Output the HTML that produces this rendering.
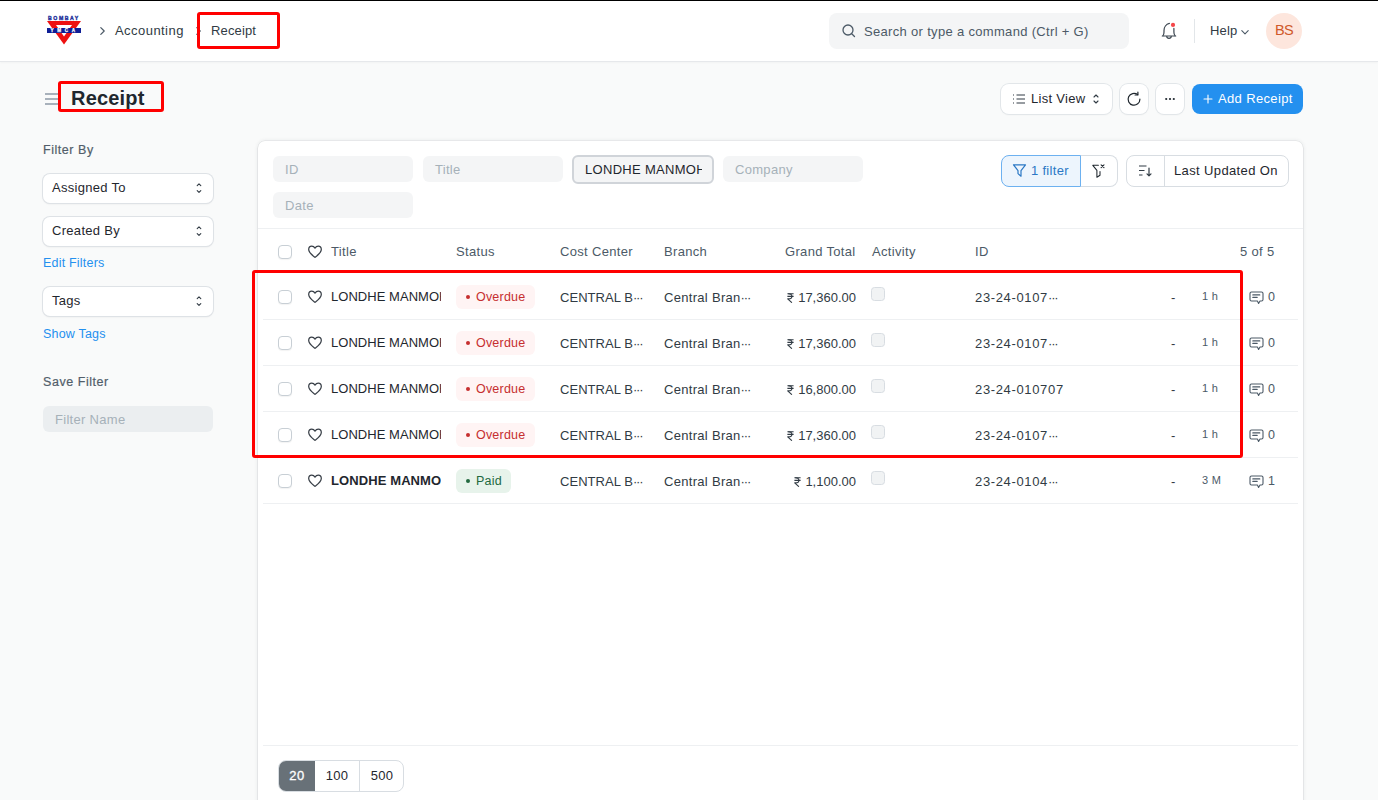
<!DOCTYPE html>
<html><head><meta charset="utf-8">
<style>
*{box-sizing:border-box;margin:0;padding:0}
html,body{width:1378px;height:800px;overflow:hidden}
body{background:#F9FAFA;font-family:"Liberation Sans",sans-serif;color:#1F272E;position:relative;font-size:13px}
.abs{position:absolute}
.topline{position:absolute;left:0;top:0;width:1378px;height:1px;background:#000}
.nav{position:absolute;left:0;top:1px;width:1378px;height:60px;background:#fff;box-shadow:0 1px 0 #E6E8EB,0 2px 2px rgba(0,0,0,.03)}
.redbox{position:absolute;border:3px solid #F00;border-radius:3px}
.crumb{position:absolute;top:23px;font-size:13px;color:#313B44;white-space:nowrap}
.search{position:absolute;left:829px;top:13px;width:300px;height:36px;background:#F4F5F6;border-radius:8px}
.search span{position:absolute;left:35px;top:11px;font-size:13px;color:#4C5A67;white-space:nowrap}
.btn{position:absolute;background:#fff;border-radius:8px;box-shadow:0 0 0 1px #E2E6E9,0 1px 2px rgba(0,0,0,.06)}
.sel{position:absolute;left:43px;width:170px;height:28.5px;background:#fff;border-radius:7px;box-shadow:0 0 0 1px #DEE2E6,0 1px 2px rgba(0,0,0,.1)}
.sel span{position:absolute;left:9px;top:6px;font-size:13px;color:#1F272E}
.card{position:absolute;left:258px;top:141px;width:1045px;height:700px;background:#fff;border-radius:7px;box-shadow:0 0 0 0.5px rgba(25,39,52,.08),0 1px 2px rgba(25,39,52,.05),0 0 4px rgba(25,39,52,.1)}
.inp{position:absolute;height:26px;width:140px;background:#F4F5F6;border-radius:6px}
.inp span{position:absolute;left:12px;top:6px;font-size:13px;color:#A6B1B9;white-space:nowrap}
.hline{position:absolute;height:1px;background:#EEF0F2}
.txt{position:absolute;white-space:nowrap;font-size:13px}
.hd{top:244px;color:#4C5A67;letter-spacing:0.32px}

.row{position:absolute;left:258px;width:1045px;height:46px}
.cb{position:absolute;left:20px;top:16px;width:14px;height:14px;border:1px solid #C8CFD5;border-radius:4px;background:#fff;box-shadow:0 1px 1px rgba(0,0,0,.05)}
.heart{left:49px;top:15px}
.ttl{position:absolute;left:73px;top:15px;width:110px;overflow:hidden;white-space:nowrap;font-size:13px;color:#1F272E;letter-spacing:0.04px}
.pill{position:absolute;left:198px;top:11px;height:24px;border-radius:6px}
.pill.red{width:79px;background:#FFF4F4;color:#C62F2F}
.pill.green{width:55px;background:#E7F3EB;color:#22693F}
.pill i{position:absolute;left:10px;top:10px;width:4px;height:4px;border-radius:50%;background:currentColor}
.pill span{position:absolute;left:20px;top:5px;font-size:12.5px;letter-spacing:0.2px;white-space:nowrap}
.cell{position:absolute;top:16px;font-size:13px;color:#313B44;white-space:nowrap;letter-spacing:0.3px}
.acb{position:absolute;left:613px;top:13px;width:14px;height:14px;border:1px solid #D8DDE2;border-radius:3.5px;background:#F1F3F4}
.tm{position:absolute;left:944px;top:16px;font-size:11px;color:#4C5A67;white-space:nowrap;letter-spacing:0.3px}
.cmt{left:991px;top:17px}
.cnt{position:absolute;left:1010px;top:16px;font-size:12.5px;color:#4C5A67}
.el{letter-spacing:-1.15px}
.rs{display:inline-block;vertical-align:baseline;margin-right:4.5px;position:relative;top:0.5px}
</style></head><body>
<div class="topline"></div>
<div class="nav"></div>
<svg class="abs" style="left:44px;top:12px" width="42" height="36" viewBox="0 0 42 36">
  <g fill="#1C2F9A" font-family="Liberation Sans" font-weight="700" font-size="5.2">
    <text x="4" y="8.2" letter-spacing="1.55" stroke="#1C2F9A" stroke-width="0.35">BOMBAY</text>
  </g>
  <polygon points="3,9 37,9 20,32.5" fill="#EE1111"/>
  <polygon points="12,13 28,13 20,24.5" fill="#fff"/>
  <rect x="3" y="16" width="34" height="5" fill="#0E1E96"/>
  <g fill="#fff" stroke="#fff" stroke-width="0.25" font-family="Liberation Sans" font-weight="700" font-size="4.6">
    <text x="6.5" y="20.3" letter-spacing="3.7">YMCA</text>
  </g>
</svg>
<svg class="abs" style="left:99px;top:26px" width="8" height="10" viewBox="0 0 8 10"><path d="M1.8 1.6 L5.2 5 L1.8 8.4" fill="none" stroke="#4C5A67" stroke-width="1.2" stroke-linecap="round" stroke-linejoin="round"/></svg>
<div class="crumb" style="left:115px;letter-spacing:0.45px">Accounting</div>
<svg class="abs" style="left:195px;top:26px" width="8" height="10" viewBox="0 0 8 10"><path d="M1.8 1.6 L5.2 5 L1.8 8.4" fill="none" stroke="#4C5A67" stroke-width="1.2" stroke-linecap="round" stroke-linejoin="round"/></svg>
<div class="crumb" style="left:211px;letter-spacing:0.15px">Receipt</div>
<div class="redbox" style="left:197px;top:12px;width:83px;height:37px"></div>
<div class="search">
  <svg class="abs" style="left:12px;top:10px" width="16" height="16" viewBox="0 0 16 16"><circle cx="7" cy="7" r="5" fill="none" stroke="#4C5A67" stroke-width="1.3"/><path d="M10.7 10.7 L13.5 13.5" stroke="#4C5A67" stroke-width="1.3" stroke-linecap="round"/></svg>
  <span style="letter-spacing:0.32px">Search or type a command (Ctrl + G)</span>
</div>
<svg class="abs" style="left:1159px;top:21px" width="20" height="20" viewBox="0 0 20 20">
  <path d="M4 14.6 C4.8 13.8 5 12.5 5 11 V9.5 C5 6.5 7 3.2 10.4 2.4" fill="none" stroke="#3A444E" stroke-width="1.2" stroke-linecap="round"/>
  <path d="M14.9 7.4 V11 C14.9 12.5 15.1 13.8 16 14.6" fill="none" stroke="#3A444E" stroke-width="1.2" stroke-linecap="round"/>
  <path d="M3.3 15 H16.7" stroke="#3A444E" stroke-width="1.2" stroke-linecap="round"/>
  <path d="M7.6 15.2 C7.8 16.6 8.6 17.4 10 17.4 C11.4 17.4 12.2 16.6 12.4 15.2" fill="none" stroke="#3A444E" stroke-width="1.2"/>
  <circle cx="14" cy="3.9" r="2.1" fill="#F5474A"/>
</svg>
<div class="abs" style="left:1194px;top:19px;width:1px;height:24px;background:#E2E6E9"></div>
<div class="txt" style="left:1210px;top:23px;color:#313B44;letter-spacing:0.2px">Help</div>
<svg class="abs" style="left:1240px;top:27px" width="10" height="10" viewBox="0 0 10 10"><path d="M1.8 3.6 L5 6.8 L8.2 3.6" fill="none" stroke="#4C5A67" stroke-width="1.1" stroke-linecap="round" stroke-linejoin="round"/></svg>
<div class="abs" style="left:1266px;top:13px;width:36px;height:36px;border-radius:50%;background:#FDE6DD"></div>
<div class="txt" style="left:1266px;top:21.5px;width:36px;text-align:center;font-size:14.5px;letter-spacing:-0.6px;color:#D0592A">BS</div>


<!-- page head -->
<svg class="abs" style="left:44px;top:92px" width="16" height="14" viewBox="0 0 16 14"><path d="M1 2 H15 M1 7 H15 M1 12 H15" stroke="#8D99A6" stroke-width="1.3"/></svg>
<div class="txt" style="left:71px;top:87px;font-size:20px;font-weight:700;color:#1F272E;letter-spacing:0.2px">Receipt</div>
<div class="redbox" style="left:58px;top:81px;width:106px;height:31px"></div>

<div class="btn" style="left:1001px;top:84px;width:111px;height:30px">
  <svg class="abs" style="left:11px;top:8px" width="14" height="14" viewBox="0 0 14 14"><path d="M4.5 3 H13 M4.5 7 H13 M4.5 11 H13" stroke="#313B44" stroke-width="1.1"/><path d="M1 3 H2 M1 7 H2 M1 11 H2" stroke="#313B44" stroke-width="1.1"/></svg>
  <span class="txt" style="left:30px;top:7px;color:#1F272E;letter-spacing:0.3px">List View</span>
  <svg class="abs" style="left:91px;top:8px" width="8" height="14" viewBox="0 0 8 14"><path d="M2 5 L4 3 L6 5 M2 9 L4 11 L6 9" fill="none" stroke="#313B44" stroke-width="1.1" stroke-linecap="round" stroke-linejoin="round"/></svg>
</div>
<div class="btn" style="left:1120px;top:84px;width:28px;height:30px">
  <svg class="abs" style="left:5px;top:6px" width="18" height="18" viewBox="0 0 18 18"><path d="M14.9 9.2 A5.9 5.9 0 1 1 12.6 4.6" fill="none" stroke="#1F272E" stroke-width="1.2" stroke-linecap="round"/><path d="M12.9 2.2 V5 H10.1" fill="none" stroke="#1F272E" stroke-width="1.2" stroke-linecap="round" stroke-linejoin="round"/></svg>
</div>
<div class="btn" style="left:1156px;top:84px;width:28px;height:30px">
  <svg class="abs" style="left:6px;top:7px" width="16" height="16" viewBox="0 0 16 16"><circle cx="4.2" cy="8" r="1.1" fill="#1F272E"/><circle cx="8" cy="8" r="1.1" fill="#1F272E"/><circle cx="11.8" cy="8" r="1.1" fill="#1F272E"/></svg>
</div>
<div class="abs" style="left:1192px;top:84px;width:111px;height:30px;background:#2490EF;border-radius:8px">
  <svg class="abs" style="left:10px;top:9px" width="12" height="12" viewBox="0 0 12 12"><path d="M6 2 V10 M2 6 H10" stroke="#fff" stroke-width="1.1" stroke-linecap="round"/></svg>
  <span class="txt" style="left:26px;top:7px;color:#fff;letter-spacing:0.35px">Add Receipt</span>
</div>

<!-- sidebar -->
<div class="txt" style="left:43px;top:143px;font-size:12.5px;font-weight:400;-webkit-text-stroke:0.2px #525E6A;color:#525E6A;letter-spacing:0.55px">Filter By</div>
<div class="sel" style="top:174px"><span style="letter-spacing:0.3px">Assigned To</span>
  <svg class="abs" style="left:152px;top:8px" width="8" height="14" viewBox="0 0 8 14"><path d="M2.2 3.7 L4 1.9 L5.8 3.7 M2.2 8.6 L4 10.4 L5.8 8.6" fill="none" stroke="#313B44" stroke-width="1.1" stroke-linecap="round" stroke-linejoin="round"/></svg></div>
<div class="sel" style="top:217px"><span style="letter-spacing:0.3px">Created By</span>
  <svg class="abs" style="left:152px;top:8px" width="8" height="14" viewBox="0 0 8 14"><path d="M2.2 3.7 L4 1.9 L5.8 3.7 M2.2 8.6 L4 10.4 L5.8 8.6" fill="none" stroke="#313B44" stroke-width="1.1" stroke-linecap="round" stroke-linejoin="round"/></svg></div>
<div class="txt" style="left:43px;top:256px;font-size:12.5px;color:#2490EF;letter-spacing:0.2px">Edit Filters</div>
<div class="sel" style="top:287px"><span style="letter-spacing:0.3px">Tags</span>
  <svg class="abs" style="left:152px;top:8px" width="8" height="14" viewBox="0 0 8 14"><path d="M2.2 3.7 L4 1.9 L5.8 3.7 M2.2 8.6 L4 10.4 L5.8 8.6" fill="none" stroke="#313B44" stroke-width="1.1" stroke-linecap="round" stroke-linejoin="round"/></svg></div>
<div class="txt" style="left:43px;top:327px;font-size:12.5px;color:#2490EF;letter-spacing:0.2px">Show Tags</div>
<div class="txt" style="left:43px;top:375px;font-size:12.5px;font-weight:400;-webkit-text-stroke:0.2px #525E6A;color:#525E6A;letter-spacing:0.55px">Save Filter</div>
<div class="abs" style="left:43px;top:406px;width:170px;height:26px;background:#EBEEF0;border-radius:6px"><span class="txt" style="left:12px;top:6px;color:#A6B1B9;letter-spacing:0.3px">Filter Name</span></div>

<!-- card -->
<div class="card"></div>
<div class="inp" style="left:273px;top:156px"><span style="letter-spacing:0.3px">ID</span></div>
<div class="inp" style="left:423px;top:156px"><span style="letter-spacing:0.3px">Title</span></div>
<div class="inp" style="left:572px;top:154.5px;width:142px;height:29px;border:2px solid #D0D4D9"><span style="left:11px;top:5.5px;color:#1F272E;letter-spacing:0.3px;width:117px;overflow:hidden">LONDHE MANMOHAN</span></div>
<div class="inp" style="left:723px;top:156px"><span style="letter-spacing:0.3px">Company</span></div>
<div class="inp" style="left:273px;top:192px"><span style="letter-spacing:0.3px">Date</span></div>

<div class="abs" style="left:1001px;top:155px;width:80px;height:32px;border-radius:8px 0 0 8px;border:1px solid #6DB1F0;background:#EDF5FD">
  <svg class="abs" style="left:10px;top:6.5px" width="15" height="15" viewBox="0 0 15 15"><path d="M1.5 1.8 H13.5 L9 7.6 V13.2 L6 10.6 V7.6 Z" fill="none" stroke="#2B78C5" stroke-width="1.2" stroke-linejoin="round"/></svg>
  <span class="txt" style="left:29px;top:7px;color:#2B78C5;letter-spacing:0.3px">1 filter</span>
</div>
<div class="abs" style="left:1081px;top:155px;width:37px;height:32px;border-radius:0 8px 8px 0;border:1px solid #D8DDE2;border-left:none;background:#fff">
  <svg class="abs" style="left:10px;top:7px" width="15" height="16" viewBox="0 0 15 16"><path d="M1.8 2.3 H7.4 M1.8 2.3 L5.9 7.4 V14.2 L9 12.2 V8.6" fill="none" stroke="#1F272E" stroke-width="1.05" stroke-linejoin="round" stroke-linecap="round"/><path d="M10.1 1.8 L13 4.7 M13 1.8 L10.1 4.7" stroke="#1F272E" stroke-width="1.05" stroke-linecap="round"/></svg>
</div>
<div class="abs" style="left:1126px;top:155px;width:163px;height:32px;border-radius:8px;border:1px solid #D8DDE2;background:#fff">
  <div class="abs" style="left:37px;top:0;width:1px;height:30px;background:#D8DDE2"></div>
  <svg class="abs" style="left:11px;top:9px" width="15" height="13" viewBox="0 0 15 13"><path d="M1 1 H8.5 M1 5.5 H6.5 M1 10 H4.5" stroke="#313B44" stroke-width="1.15"/><path d="M11 3 V10.8 M9 8.8 L11 10.8 L13 8.8" fill="none" stroke="#313B44" stroke-width="1.2" stroke-linecap="round" stroke-linejoin="round"/></svg>
  <span class="txt" style="left:47px;top:7px;color:#1F272E;letter-spacing:0.37px">Last Updated On</span>
</div>

<div class="hline" style="left:258px;top:228px;width:1045px"></div>

<!-- header row -->
<div class="abs" style="left:278px;top:245px;width:14px;height:14px;border:1px solid #C8CFD5;border-radius:4px;background:#fff;box-shadow:0 1px 1px rgba(0,0,0,.05)"></div>
<svg class="abs" style="left:307px;top:244px" width="16" height="16" viewBox="0 0 16 16"><path d="M8 13.3 C6.2 11.9 1.7 8.8 1.7 5.5 C1.7 3.5 3.1 2.2 4.8 2.2 C6.2 2.2 7.3 3 8 4.1 C8.7 3 9.8 2.2 11.2 2.2 C12.9 2.2 14.3 3.5 14.3 5.5 C14.3 8.8 9.8 11.9 8 13.3 Z" fill="none" stroke="#383F47" stroke-width="1.25" stroke-linejoin="round"/></svg>
<div class="txt hd" style="left:331px">Title</div>
<div class="txt hd" style="left:456px">Status</div>
<div class="txt hd" style="left:560px">Cost Center</div>
<div class="txt hd" style="left:664px">Branch</div>
<div class="txt hd" style="left:785px">Grand Total</div>
<div class="txt hd" style="left:872px">Activity</div>
<div class="txt hd" style="left:975px">ID</div>
<div class="txt hd" style="left:1240px">5 of 5</div>
<!-- rows -->
<div class="row" style="top:274px">
<div class="cb"></div>
<svg class="abs heart" width="16" height="16" viewBox="0 0 16 16"><path d="M8 13.3 C6.2 11.9 1.7 8.8 1.7 5.5 C1.7 3.5 3.1 2.2 4.8 2.2 C6.2 2.2 7.3 3 8 4.1 C8.7 3 9.8 2.2 11.2 2.2 C12.9 2.2 14.3 3.5 14.3 5.5 C14.3 8.8 9.8 11.9 8 13.3 Z" fill="none" stroke="#383F47" stroke-width="1.25" stroke-linejoin="round"/></svg>
<div class="ttl" style="">LONDHE MANMOHAN</div>
<div class="pill red"><i></i><span>Overdue</span></div>
<div class="cell" style="left:302px;letter-spacing:0.05px">CENTRAL B<span class="el">···</span></div>
<div class="cell" style="left:406px">Central Bran<span class="el">···</span></div>
<div class="cell" style="left:498px;width:100px;text-align:right;letter-spacing:0"><svg class="rs" width="7" height="10" viewBox="0 0 7 10"><path d="M0.4 0.8 H6.6 M0.4 3.4 H6.6" stroke="#313B44" stroke-width="1.1"/><path d="M1.2 0.8 C3.8 0.8 4.9 1.9 4.9 3.4 C4.9 5 3.8 5.9 1.4 5.9 H0.7 L4.9 9.7" fill="none" stroke="#313B44" stroke-width="1.1" stroke-linejoin="round"/></svg>17,360.00</div>
<div class="acb"></div>
<div class="cell" style="left:717px;letter-spacing:0.65px">23-24-0107<span class="el">···</span></div>
<div class="cell" style="left:913px">-</div>
<div class="tm">1 h</div>
<svg class="abs cmt" width="15" height="14" viewBox="0 0 15 14"><path d="M2.5 1 H12.5 C13.3 1 14 1.7 14 2.5 V8.5 C14 9.3 13.3 10 12.5 10 H11 L9.6 12.4 L8.4 10 H2.5 C1.7 10 1 9.3 1 8.5 V2.5 C1 1.7 1.7 1 2.5 1 Z" fill="none" stroke="#4C5A67" stroke-width="1.1" stroke-linejoin="round"/><path d="M3.8 3.9 H10.8 M3.8 6.4 H8.2" stroke="#4C5A67" stroke-width="1.1" stroke-linecap="round"/></svg>
<div class="cnt">0</div>
</div>
<div class="hline" style="left:263px;top:319px;width:1035px"></div>
<div class="row" style="top:320px">
<div class="cb"></div>
<svg class="abs heart" width="16" height="16" viewBox="0 0 16 16"><path d="M8 13.3 C6.2 11.9 1.7 8.8 1.7 5.5 C1.7 3.5 3.1 2.2 4.8 2.2 C6.2 2.2 7.3 3 8 4.1 C8.7 3 9.8 2.2 11.2 2.2 C12.9 2.2 14.3 3.5 14.3 5.5 C14.3 8.8 9.8 11.9 8 13.3 Z" fill="none" stroke="#383F47" stroke-width="1.25" stroke-linejoin="round"/></svg>
<div class="ttl" style="">LONDHE MANMOHAN</div>
<div class="pill red"><i></i><span>Overdue</span></div>
<div class="cell" style="left:302px;letter-spacing:0.05px">CENTRAL B<span class="el">···</span></div>
<div class="cell" style="left:406px">Central Bran<span class="el">···</span></div>
<div class="cell" style="left:498px;width:100px;text-align:right;letter-spacing:0"><svg class="rs" width="7" height="10" viewBox="0 0 7 10"><path d="M0.4 0.8 H6.6 M0.4 3.4 H6.6" stroke="#313B44" stroke-width="1.1"/><path d="M1.2 0.8 C3.8 0.8 4.9 1.9 4.9 3.4 C4.9 5 3.8 5.9 1.4 5.9 H0.7 L4.9 9.7" fill="none" stroke="#313B44" stroke-width="1.1" stroke-linejoin="round"/></svg>17,360.00</div>
<div class="acb"></div>
<div class="cell" style="left:717px;letter-spacing:0.65px">23-24-0107<span class="el">···</span></div>
<div class="cell" style="left:913px">-</div>
<div class="tm">1 h</div>
<svg class="abs cmt" width="15" height="14" viewBox="0 0 15 14"><path d="M2.5 1 H12.5 C13.3 1 14 1.7 14 2.5 V8.5 C14 9.3 13.3 10 12.5 10 H11 L9.6 12.4 L8.4 10 H2.5 C1.7 10 1 9.3 1 8.5 V2.5 C1 1.7 1.7 1 2.5 1 Z" fill="none" stroke="#4C5A67" stroke-width="1.1" stroke-linejoin="round"/><path d="M3.8 3.9 H10.8 M3.8 6.4 H8.2" stroke="#4C5A67" stroke-width="1.1" stroke-linecap="round"/></svg>
<div class="cnt">0</div>
</div>
<div class="hline" style="left:263px;top:365px;width:1035px"></div>
<div class="row" style="top:366px">
<div class="cb"></div>
<svg class="abs heart" width="16" height="16" viewBox="0 0 16 16"><path d="M8 13.3 C6.2 11.9 1.7 8.8 1.7 5.5 C1.7 3.5 3.1 2.2 4.8 2.2 C6.2 2.2 7.3 3 8 4.1 C8.7 3 9.8 2.2 11.2 2.2 C12.9 2.2 14.3 3.5 14.3 5.5 C14.3 8.8 9.8 11.9 8 13.3 Z" fill="none" stroke="#383F47" stroke-width="1.25" stroke-linejoin="round"/></svg>
<div class="ttl" style="">LONDHE MANMOHAN</div>
<div class="pill red"><i></i><span>Overdue</span></div>
<div class="cell" style="left:302px;letter-spacing:0.05px">CENTRAL B<span class="el">···</span></div>
<div class="cell" style="left:406px">Central Bran<span class="el">···</span></div>
<div class="cell" style="left:498px;width:100px;text-align:right;letter-spacing:0"><svg class="rs" width="7" height="10" viewBox="0 0 7 10"><path d="M0.4 0.8 H6.6 M0.4 3.4 H6.6" stroke="#313B44" stroke-width="1.1"/><path d="M1.2 0.8 C3.8 0.8 4.9 1.9 4.9 3.4 C4.9 5 3.8 5.9 1.4 5.9 H0.7 L4.9 9.7" fill="none" stroke="#313B44" stroke-width="1.1" stroke-linejoin="round"/></svg>16,800.00</div>
<div class="acb"></div>
<div class="cell" style="left:717px;letter-spacing:0.65px">23-24-010707</div>
<div class="cell" style="left:913px">-</div>
<div class="tm">1 h</div>
<svg class="abs cmt" width="15" height="14" viewBox="0 0 15 14"><path d="M2.5 1 H12.5 C13.3 1 14 1.7 14 2.5 V8.5 C14 9.3 13.3 10 12.5 10 H11 L9.6 12.4 L8.4 10 H2.5 C1.7 10 1 9.3 1 8.5 V2.5 C1 1.7 1.7 1 2.5 1 Z" fill="none" stroke="#4C5A67" stroke-width="1.1" stroke-linejoin="round"/><path d="M3.8 3.9 H10.8 M3.8 6.4 H8.2" stroke="#4C5A67" stroke-width="1.1" stroke-linecap="round"/></svg>
<div class="cnt">0</div>
</div>
<div class="hline" style="left:263px;top:411px;width:1035px"></div>
<div class="row" style="top:412px">
<div class="cb"></div>
<svg class="abs heart" width="16" height="16" viewBox="0 0 16 16"><path d="M8 13.3 C6.2 11.9 1.7 8.8 1.7 5.5 C1.7 3.5 3.1 2.2 4.8 2.2 C6.2 2.2 7.3 3 8 4.1 C8.7 3 9.8 2.2 11.2 2.2 C12.9 2.2 14.3 3.5 14.3 5.5 C14.3 8.8 9.8 11.9 8 13.3 Z" fill="none" stroke="#383F47" stroke-width="1.25" stroke-linejoin="round"/></svg>
<div class="ttl" style="">LONDHE MANMOHAN</div>
<div class="pill red"><i></i><span>Overdue</span></div>
<div class="cell" style="left:302px;letter-spacing:0.05px">CENTRAL B<span class="el">···</span></div>
<div class="cell" style="left:406px">Central Bran<span class="el">···</span></div>
<div class="cell" style="left:498px;width:100px;text-align:right;letter-spacing:0"><svg class="rs" width="7" height="10" viewBox="0 0 7 10"><path d="M0.4 0.8 H6.6 M0.4 3.4 H6.6" stroke="#313B44" stroke-width="1.1"/><path d="M1.2 0.8 C3.8 0.8 4.9 1.9 4.9 3.4 C4.9 5 3.8 5.9 1.4 5.9 H0.7 L4.9 9.7" fill="none" stroke="#313B44" stroke-width="1.1" stroke-linejoin="round"/></svg>17,360.00</div>
<div class="acb"></div>
<div class="cell" style="left:717px;letter-spacing:0.65px">23-24-0107<span class="el">···</span></div>
<div class="cell" style="left:913px">-</div>
<div class="tm">1 h</div>
<svg class="abs cmt" width="15" height="14" viewBox="0 0 15 14"><path d="M2.5 1 H12.5 C13.3 1 14 1.7 14 2.5 V8.5 C14 9.3 13.3 10 12.5 10 H11 L9.6 12.4 L8.4 10 H2.5 C1.7 10 1 9.3 1 8.5 V2.5 C1 1.7 1.7 1 2.5 1 Z" fill="none" stroke="#4C5A67" stroke-width="1.1" stroke-linejoin="round"/><path d="M3.8 3.9 H10.8 M3.8 6.4 H8.2" stroke="#4C5A67" stroke-width="1.1" stroke-linecap="round"/></svg>
<div class="cnt">0</div>
</div>
<div class="hline" style="left:263px;top:457px;width:1035px"></div>
<div class="row" style="top:458px">
<div class="cb"></div>
<svg class="abs heart" width="16" height="16" viewBox="0 0 16 16"><path d="M8 13.3 C6.2 11.9 1.7 8.8 1.7 5.5 C1.7 3.5 3.1 2.2 4.8 2.2 C6.2 2.2 7.3 3 8 4.1 C8.7 3 9.8 2.2 11.2 2.2 C12.9 2.2 14.3 3.5 14.3 5.5 C14.3 8.8 9.8 11.9 8 13.3 Z" fill="none" stroke="#383F47" stroke-width="1.25" stroke-linejoin="round"/></svg>
<div class="ttl" style="font-weight:700;letter-spacing:0.1px;">LONDHE MANMOHAN</div>
<div class="pill green"><i></i><span>Paid</span></div>
<div class="cell" style="left:302px;letter-spacing:0.05px">CENTRAL B<span class="el">···</span></div>
<div class="cell" style="left:406px">Central Bran<span class="el">···</span></div>
<div class="cell" style="left:498px;width:100px;text-align:right;letter-spacing:0"><svg class="rs" width="7" height="10" viewBox="0 0 7 10"><path d="M0.4 0.8 H6.6 M0.4 3.4 H6.6" stroke="#313B44" stroke-width="1.1"/><path d="M1.2 0.8 C3.8 0.8 4.9 1.9 4.9 3.4 C4.9 5 3.8 5.9 1.4 5.9 H0.7 L4.9 9.7" fill="none" stroke="#313B44" stroke-width="1.1" stroke-linejoin="round"/></svg>1,100.00</div>
<div class="acb"></div>
<div class="cell" style="left:717px;letter-spacing:0.65px">23-24-0104<span class="el">···</span></div>
<div class="cell" style="left:913px">-</div>
<div class="tm">3 M</div>
<svg class="abs cmt" width="15" height="14" viewBox="0 0 15 14"><path d="M2.5 1 H12.5 C13.3 1 14 1.7 14 2.5 V8.5 C14 9.3 13.3 10 12.5 10 H11 L9.6 12.4 L8.4 10 H2.5 C1.7 10 1 9.3 1 8.5 V2.5 C1 1.7 1.7 1 2.5 1 Z" fill="none" stroke="#4C5A67" stroke-width="1.1" stroke-linejoin="round"/><path d="M3.8 3.9 H10.8 M3.8 6.4 H8.2" stroke="#4C5A67" stroke-width="1.1" stroke-linecap="round"/></svg>
<div class="cnt">1</div>
</div>
<div class="hline" style="left:263px;top:503px;width:1035px"></div>

<div class="redbox" style="left:252px;top:270px;width:991px;height:188px"></div>
<div class="hline" style="left:263px;top:745px;width:1035px"></div>
<div class="abs" style="left:278px;top:760px;width:126px;height:32px;border:1px solid #D8DDE2;border-radius:8px;background:#fff;overflow:hidden">
  <div class="abs" style="left:-1px;top:-1px;width:37px;height:32px;background:#687178"></div>
  <span class="txt" style="left:0;top:6.5px;width:36px;text-align:center;color:#fff;font-size:13px;letter-spacing:0.6px;-webkit-text-stroke:0.3px #fff">20</span>
  <div class="abs" style="left:80px;top:0;width:1px;height:30px;background:#D8DDE2"></div>
  <span class="txt" style="left:36px;top:6.5px;width:44px;text-align:center;color:#1F272E;font-size:13px;letter-spacing:0.3px">100</span>
  <span class="txt" style="left:81px;top:6.5px;width:44px;text-align:center;color:#1F272E;font-size:13px;letter-spacing:0.3px">500</span>
</div>
</body></html>
